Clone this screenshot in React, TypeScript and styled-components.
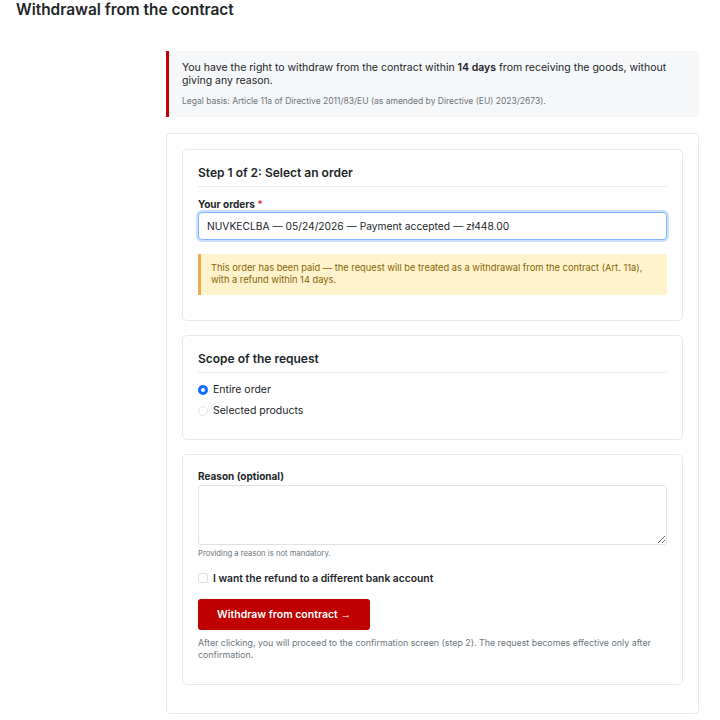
import styled, { createGlobalStyle } from "styled-components";

const GlobalStyle = createGlobalStyle`
    * {
        box-sizing: border-box;
    }

    body {
        margin: 0;
        background: #ffffff;
        color: #212529;
        font-family: Inter, "Noto Sans", "Liberation Sans", sans-serif;
    }
`;

interface ScopeOption {
    id: string;
    label: string;
}

const scopeOptions: ScopeOption[] = [
    { id: "entire", label: "Entire order" },
    { id: "selected", label: "Selected products" },
];

const App = () => {
    return (
        <>
            <GlobalStyle />
            <Page>
                <Title>Withdrawal from the contract</Title>

                <Layout>
                    <Aside />

                    <Main>
                        <Notice>
                            <NoticeText>
                                You have the right to withdraw from the contract
                                within <strong>14 days</strong> from receiving
                                the goods, without giving any reason.
                            </NoticeText>
                            <NoticeSmall>
                                Legal basis: Article 11a of Directive 2011/83/EU
                                (as amended by Directive (EU) 2023/2673).
                            </NoticeSmall>
                        </Notice>

                        <FormCard>
                            <Section>
                                <SectionTitle>
                                    Step 1 of 2: Select an order
                                </SectionTitle>
                                <Label htmlFor="order">
                                    Your orders <Required>*</Required>
                                </Label>
                                <Select id="order" defaultValue="NUVKECLBA">
                                    <option value="NUVKECLBA">
                                        NUVKECLBA — 05/24/2026 — Payment
                                        accepted — zł448.00
                                    </option>
                                </Select>
                                <Warning>
                                    This order has been paid — the request will
                                    be treated as a withdrawal from the contract
                                    (Art. 11a), with a refund within 14 days.
                                </Warning>
                            </Section>

                            <Section>
                                <SectionTitle>Scope of the request</SectionTitle>
                                <RadioList>
                                    {scopeOptions.map((option, index) => (
                                        <RadioRow key={option.id}>
                                            <Radio $checked={index === 0} />
                                            {option.label}
                                        </RadioRow>
                                    ))}
                                </RadioList>
                            </Section>

                            <Section>
                                <Label htmlFor="reason">Reason (optional)</Label>
                                <TextArea id="reason" />
                                <Hint>Providing a reason is not mandatory.</Hint>

                                <CheckRow>
                                    <CheckBox />
                                    I want the refund to a different bank
                                    account
                                </CheckRow>

                                <SubmitButton type="button">
                                    Withdraw from contract <Arrow>→</Arrow>
                                </SubmitButton>

                                <Footnote>
                                    After clicking, you will proceed to the
                                    confirmation screen (step 2). The request
                                    becomes effective only after confirmation.
                                </Footnote>
                            </Section>
                        </FormCard>
                    </Main>
                </Layout>
            </Page>
        </>
    );
};

const Page = styled.div`
    padding: 0 21px 0 16px;
`;

const Title = styled.h1`
    margin: 0;

    font-size: 15.4px;
    font-weight: 600;
    line-height: 20px;

    color: #212529;
`;

const Layout = styled.div`
    display: flex;

    margin-top: 31px;
`;

const Aside = styled.aside`
    flex: 0 0 150px;
`;

const Main = styled.main`
    flex: 1;

    display: flex;
    flex-direction: column;
    gap: 16px;
`;

const Notice = styled.div`
    padding: 10px 13px 10px;

    background: #f6f7f8;

    border-left: 3px solid #c40000;
    border-radius: 0 4px 4px 0;
`;

const NoticeText = styled.p`
    margin: 0;

    font-size: 10.5px;
    line-height: 13px;

    color: #212529;

    & strong {
        font-weight: 600;
    }
`;

const NoticeSmall = styled.p`
    margin: 8px 0 0;

    font-size: 8.5px;
    line-height: 12px;

    color: #6c757d;
`;

const FormCard = styled.div`
    display: flex;
    flex-direction: column;
    gap: 14px;

    padding: 15px 15px 28px;

    border: 1px solid #e6e8eb;
    border-radius: 4px;
`;

const Section = styled.section`
    display: flex;
    flex-direction: column;

    padding: 15px;

    border: 1px solid #e6e8eb;
    border-radius: 5px;
`;

const SectionTitle = styled.h2`
    margin: 0 0 11px;
    padding-bottom: 5px;

    font-size: 12px;
    font-weight: 600;
    line-height: 16px;

    color: #212529;

    border-bottom: 1px solid #e9ecef;
`;

const Label = styled.label`
    margin-bottom: 2px;

    font-size: 10px;
    font-weight: 700;
    line-height: 12px;

    color: #212529;
`;

const Required = styled.span`
    color: #dc3545;
`;

const Select = styled.select`
    appearance: none;

    height: 28px;
    padding: 0 8px;

    font-family: inherit;
    font-size: 10.25px;

    color: #212529;
    background: #ffffff;

    border: 1px solid #86b7fe;
    border-radius: 4px;
    outline: none;
    box-shadow: 0 0 0 2px rgba(13, 110, 253, 0.22);
`;

const Warning = styled.div`
    margin: 14px 0 10px;
    padding: 8px 10px 9px;

    font-size: 9.3px;
    line-height: 12px;

    color: #856404;
    background: #fff3cd;

    border-left: 3px solid #f0ad4e;
    border-radius: 0 3px 3px 0;
`;

const RadioList = styled.div`
    display: flex;
    flex-direction: column;
    gap: 4px;

    margin-top: -3px;
    margin-bottom: 5px;
`;

const RadioRow = styled.label`
    display: flex;
    align-items: center;
    gap: 5px;

    font-size: 10.5px;
    line-height: 17px;

    color: #212529;
`;

const Radio = styled.span<{ $checked: boolean }>`
    width: 10px;
    height: 10px;

    border-radius: 50%;

    background: #ffffff;
    border: ${(props) =>
        props.$checked ? "3px solid #0d6efd" : "1px solid #e3e5e8"};
`;

const TextArea = styled.textarea`
    height: 60px;
    margin-top: 1px;

    font-family: inherit;

    border: 1px solid #dee2e6;
    border-radius: 3px;
    resize: vertical;
`;

const Hint = styled.div`
    margin-top: 3px;

    font-size: 7.7px;
    line-height: 12px;

    color: #6c757d;
`;

const CheckRow = styled.label`
    display: flex;
    align-items: center;
    gap: 5px;

    margin-top: 11px;

    font-size: 10.3px;
    font-weight: 600;
    line-height: 14px;

    color: #212529;
`;

const CheckBox = styled.span`
    width: 10px;
    height: 10px;

    border: 1px solid #dee2e6;
    border-radius: 2px;
`;

const SubmitButton = styled.button`
    align-self: flex-start;

    width: 172px;
    height: 31px;
    margin-top: 14px;

    font-family: inherit;
    font-size: 10.5px;
    font-weight: 600;

    color: #ffffff;
    background: #c00000;

    border: none;
    border-radius: 3px;
`;

const Arrow = styled.span`
    font-family: "Liberation Sans", sans-serif;
    font-weight: 400;
`;

const Footnote = styled.p`
    margin: 7px 0 8px;

    font-size: 8.85px;
    line-height: 12px;

    color: #6c757d;
`;

export default App;
